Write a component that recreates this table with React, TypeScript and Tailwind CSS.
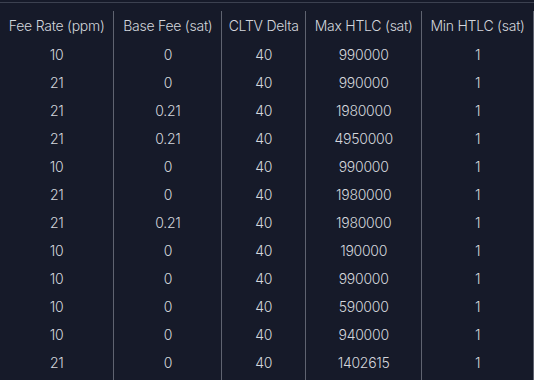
const headers = [
  'Fee Rate (ppm)',
  'Base Fee (sat)',
  'CLTV Delta',
  'Max HTLC (sat)',
  'Min HTLC (sat)',
]

const rows = [
  ['10', '0', '40', '990000', '1'],
  ['21', '0', '40', '990000', '1'],
  ['21', '0.21', '40', '1980000', '1'],
  ['21', '0.21', '40', '4950000', '1'],
  ['10', '0', '40', '990000', '1'],
  ['21', '0', '40', '1980000', '1'],
  ['21', '0.21', '40', '1980000', '1'],
  ['10', '0', '40', '190000', '1'],
  ['10', '0', '40', '990000', '1'],
  ['10', '0', '40', '590000', '1'],
  ['10', '0', '40', '940000', '1'],
  ['21', '0', '40', '1402615', '1'],
  ['', '', '', '', ''],
]

const widths = ['w-[114px]', 'w-[108px]', 'w-[84px]', 'w-[116px]', 'w-[112px]']

export default function App() {
  return (
    <div className="h-[380px] w-[534px] overflow-hidden bg-[#161a29] pt-[2px] font-['Inter',sans-serif] text-[14px] tracking-[-0.25px] text-[#d3d6dc]">
      <div className="h-px w-full bg-[#3c4150]" />
      <table className="mt-[8px] table-fixed border-collapse">
        <thead>
          <tr className="h-[29px]">
            {headers.map((h, i) => (
              <th
                key={h}
                className={`${widths[i]} border-r border-[#5f6370] px-0 text-center font-light whitespace-nowrap`}
              >
                {h}
              </th>
            ))}
          </tr>
        </thead>
        <tbody>
          {rows.map((r, ri) => (
            <tr key={ri} className="h-[28px]">
              {r.map((c, ci) => (
                <td
                  key={ci}
                  className={`${widths[ci]} border-r border-[#5f6370] text-center font-light`}
                >
                  {c}
                </td>
              ))}
            </tr>
          ))}
        </tbody>
      </table>
    </div>
  )
}
